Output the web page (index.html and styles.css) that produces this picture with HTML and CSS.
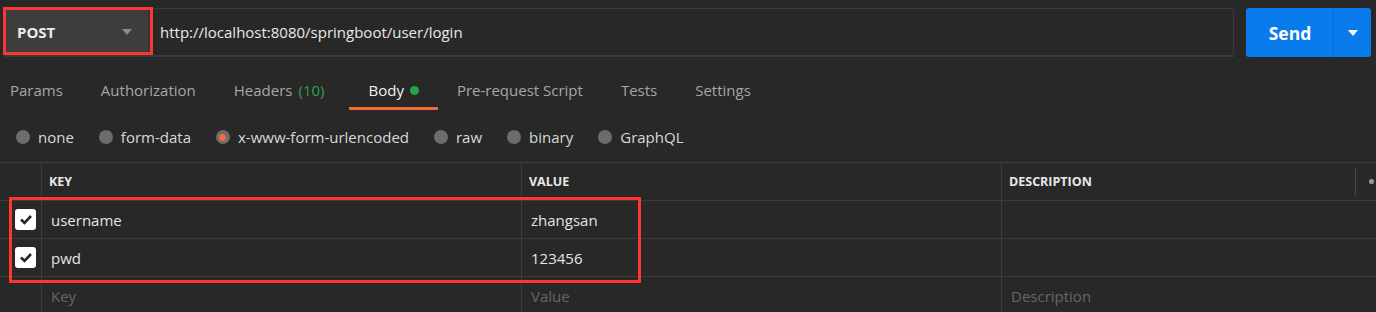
FILE: index.html
```html
<!DOCTYPE html>
<html lang="en">
<head>
    <meta charset="UTF-8">
    <title>POST login - request</title>
    <link rel="stylesheet" href="styles.css">
</head>
<body>

    <div class="request-bar">
        <div class="url-group">
            <div class="method">
                <span>POST</span>
                <span class="caret"></span>
            </div>
            <div class="url">http://localhost:8080/springboot/user/login</div>
        </div>
        <div class="send">
            <span class="send-label">Send</span>
            <span class="send-more"><span class="caret white"></span></span>
        </div>
    </div>

    <nav class="tabs">
        <span class="tab first">Params</span>
        <span class="tab">Authorization</span>
        <span class="tab">Headers <span class="count">(10)</span></span>
        <span class="tab active">Body <span class="dot"></span></span>
        <span class="tab">Pre-request Script</span>
        <span class="tab">Tests</span>
        <span class="tab">Settings</span>
    </nav>

    <div class="body-types">
        <span class="radio"><span class="circle"></span>none</span>
        <span class="radio"><span class="circle"></span>form-data</span>
        <span class="radio"><span class="circle checked"></span>x-www-form-urlencoded</span>
        <span class="radio"><span class="circle"></span>raw</span>
        <span class="radio"><span class="circle"></span>binary</span>
        <span class="radio"><span class="circle"></span>GraphQL</span>
    </div>

    <div class="params">
        <div class="cell"></div>
        <div class="cell head">Key</div>
        <div class="cell head">Value</div>
        <div class="cell head desc-head">
            <span>Description</span>
            <span class="head-tools"><span class="sep"></span><span class="more"></span></span>
        </div>

        <div class="cell box"><span class="check"><svg width="14" height="11" viewBox="0 0 14 11"><path d="M2 5.5 L5.5 9 L12 2" fill="none" stroke="#262626" stroke-width="2.6"/></svg></span></div>
        <div class="cell">username</div>
        <div class="cell">zhangsan</div>
        <div class="cell"></div>

        <div class="cell box"><span class="check"><svg width="14" height="11" viewBox="0 0 14 11"><path d="M2 5.5 L5.5 9 L12 2" fill="none" stroke="#262626" stroke-width="2.6"/></svg></span></div>
        <div class="cell">pwd</div>
        <div class="cell">123456</div>
        <div class="cell"></div>

        <div class="cell box"></div>
        <div class="cell hint">Key</div>
        <div class="cell hint">Value</div>
        <div class="cell hint">Description</div>
    </div>

    <!-- markierungen -->
    <div class="mark mark-method"></div>
    <div class="mark mark-rows"></div>

</body>
</html>
```

FILE: styles.css
```css
* {
    box-sizing: border-box;
    margin: 0;
}
body {
    background-color: #282828;
    color: #e2e2e2;
    font-family: 'Open Sans', 'Noto Sans', sans-serif;
    font-size: 15px;
    width: 1376px;
    height: 312px;
    overflow: hidden;
    position: relative;
}
.request-bar {
    display: flex;
    padding: 8px 5px 0 5px;
    height: 57px;
}
.url-group {
    display: flex;
    flex: 1;
    border-bottom: 1px solid #3a3a3a;
}
.method {
    width: 145px;
    background-color: #3d3d3d;
    display: flex;
    align-items: center;
    justify-content: space-between;
    padding: 0 16px 0 12px;
    font-weight: bold;
    font-size: 15px;
    color: #ececec;
    border-right: 2px solid #333;
}
.caret {
    width: 0;
    height: 0;
    border-left: 5px solid transparent;
    border-right: 5px solid transparent;
    border-top: 6px solid #8a8a8a;
}
.caret.white {
    border-top-color: #fff;
}
.url {
    flex: 1;
    border: 1px solid #3b3b3b;
    border-left: none;
    border-radius: 0 3px 3px 0;
    display: flex;
    align-items: center;
    padding-left: 10px;
    color: #e8e8e8;
}
.send {
    margin-left: 12px;
    width: 125px;
    background-color: #097bed;
    border-radius: 3px;
    display: flex;
    color: white;
}
.send-label {
    width: 87px;
    display: flex;
    align-items: center;
    justify-content: center;
    font-weight: bold;
    font-size: 17.5px;
    padding-left: 1px;
}
.send-more {
    flex: 1;
    border-left: 1px solid #0a6ed4;
    display: flex;
    align-items: center;
    justify-content: center;
}
.tabs {
    display: flex;
    height: 53px;
    padding-top: 18px;
}
.tab {
    padding: 0 19px 2px;
    color: #a6a6a6;
    height: 35px;
    display: flex;
    align-items: center;
    gap: 6px;
    border-bottom: 3px solid transparent;
    line-height: 1;
}
.tab.first {
    padding-left: 10px;
}
.tab .count {
    color: #2aa14a;
}
.tab.active {
    color: #f2f2f2;
    border-bottom-color: #f2693a;
    margin-left: 6px;
}
.dot {
    width: 9px;
    height: 9px;
    border-radius: 50%;
    background-color: #26a24a;
}
.body-types {
    display: flex;
    align-items: center;
    height: 52px;
    padding-left: 16px;
    padding-top: 2px;
}
.radio {
    display: flex;
    align-items: center;
    gap: 8px;
    margin-right: 25px;
    color: #d8d8d8;
}
.circle {
    width: 14px;
    height: 14px;
    border-radius: 50%;
    background-color: #6c6c6c;
    display: flex;
    align-items: center;
    justify-content: center;
}
.circle.checked::after {
    content: "";
    width: 7px;
    height: 7px;
    border-radius: 50%;
    background-color: #f2693a;
}
.params {
    display: grid;
    grid-template-columns: 41px 480px 480px 1fr;
    grid-auto-rows: 38px;
    border-top: 1px solid #3b3b3b;
}
.cell {
    border-bottom: 1px solid #3b3b3b;
    border-left: 1px solid #3b3b3b;
    display: flex;
    align-items: center;
    padding-left: 9px;
    color: #e4e4e4;
}
.cell:nth-child(4n+1) {
    border-left: none;
}
.head {
    text-transform: uppercase;
    font-weight: bold;
    font-size: 12.5px;
    padding-left: 7px;
    color: #e8e8e8;
}
.desc-head {
    justify-content: space-between;
}
.head-tools {
    display: flex;
    align-items: center;
    height: 100%;
}
.sep {
    width: 1px;
    height: 27px;
    background-color: #4a4a4a;
    margin-right: 13px;
}
.more {
    width: 5px;
    height: 5px;
    border-radius: 50%;
    background-color: #9a9a9a;
    margin-right: 2px;
}
.box {
    padding-left: 15px;
}
.check {
    width: 21px;
    height: 21px;
    background-color: #fff;
    border-radius: 3px;
    display: flex;
    align-items: center;
    justify-content: center;
}
.hint {
    color: #666;
}
.mark {
    position: absolute;
    border: 3px solid #ff3434;
}
.mark-method {
    left: 3px;
    top: 7px;
    width: 150px;
    height: 48px;
}
.mark-rows {
    left: 9px;
    top: 197px;
    width: 632px;
    height: 86px;
}
```
